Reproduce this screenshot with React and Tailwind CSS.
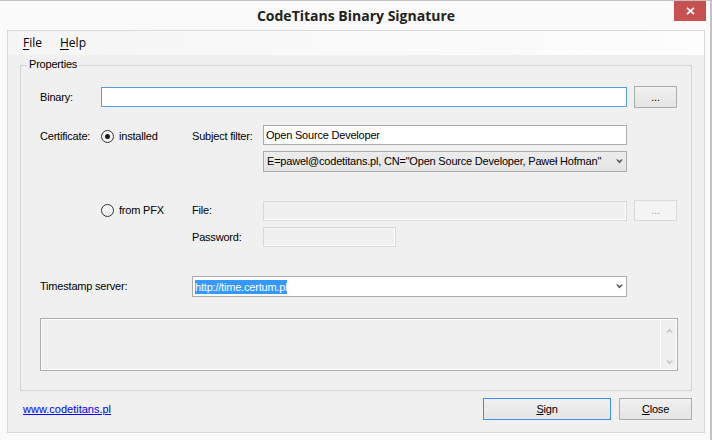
import React from "react";

function Radio({ checked }) {
  return (
    <span className="flex w-[13px] h-[13px] shrink-0 items-center justify-center rounded-full border border-[#333333] bg-gradient-to-b from-[#fcfcfc] to-[#ececec]">
      {checked && <span className="w-[5px] h-[5px] rounded-full bg-[#1c1c1c]" />}
    </span>
  );
}

function Chevron({ color = "#5a5a5a", flip = false }) {
  return (
    <svg width="7" height="5" viewBox="0 0 7 5" className={flip ? "rotate-180" : ""}>
      <path d="M0 0.5H2L3.5 2L5 0.5H7L3.5 4.5Z" fill={color} />
    </svg>
  );
}

function Btn({ children, className = "", disabled = false, primary = false }) {
  const border = disabled
    ? "border-[#d9d9d9] bg-[#f4f4f4] text-[#a3a3a3]"
    : primary
    ? "border-[#3c8ff0] bg-gradient-to-b from-[#f0f0f0] to-[#e5e5e5] text-black"
    : "border-[#acacac] bg-gradient-to-b from-[#f0f0f0] to-[#e5e5e5] text-black";
  return (
    <div className={"flex items-center justify-center border " + border + " " + className}>
      {children}
    </div>
  );
}

export default function App() {
  return (
    <div className="w-[712px] h-[440px] overflow-hidden bg-[#fafafa] flex flex-col border-t border-r-2 border-[#c3c3c3] pl-[7px] pr-[5px] pb-[7px] font-['Liberation_Sans',Arial,sans-serif] text-[11px] leading-[13px] tracking-[-0.2px] text-black">
      {/* title bar */}
      <div className="relative h-[29px] shrink-0 flex items-center justify-center">
        <span className="font-['Open_Sans',sans-serif] font-bold text-[14px] leading-[18px] tracking-normal text-[#222222]">
          CodeTitans Binary Signature
        </span>
        <div className="absolute top-0 right-[-1px] w-[32px] h-[20px] bg-[#c75050] flex items-center justify-center">
          <svg width="9" height="8" viewBox="0 0 9 8">
            <path d="M1 0.8L8 7.2M8 0.8L1 7.2" stroke="#ffffff" strokeWidth="1.7" />
          </svg>
        </div>
      </div>

      {/* client */}
      <div className="flex-1 flex flex-col border border-[#d9d9d9] bg-[#f0f0f0]">
        {/* menu */}
        <div className="h-[24px] shrink-0 flex items-center bg-gradient-to-r from-[#f5f5f5] to-[#fdfdfd] font-['Open_Sans',sans-serif] text-[12px] leading-[16px] tracking-normal">
          <span className="ml-[15px]">
            <span className="underline underline-offset-2">F</span>ile
          </span>
          <span className="ml-[18px]">
            <span className="underline underline-offset-2">H</span>elp
          </span>
        </div>

        {/* group box */}
        <div className="relative mt-[10px] mx-[12px] border border-[#d5d5d5] pl-[19px] pb-[19px] flex flex-col">
          <span className="absolute top-[-8px] left-[6px] px-[2px] bg-[#f0f0f0]">Properties</span>

          {/* Binary */}
          <div className="mt-[20px] h-[22px] flex items-center">
            <span className="w-[61px]">Binary:</span>
            <div className="w-[526px] h-[20px] bg-white border border-[#569de5]" />
            <Btn className="ml-[7px] w-[43px] h-[22px]">...</Btn>
          </div>

          {/* Certificate installed */}
          <div className="mt-[17px] h-[20px] flex items-start">
            <span className="w-[61px] mt-[5px]">Certificate:</span>
            <span className="w-[91px] mt-[5px] h-[13px] flex items-center gap-[5px]">
              <Radio checked />
              <span>installed</span>
            </span>
            <span className="w-[71px] mt-[5px]">Subject filter:</span>
            <div className="w-[364px] h-[20px] bg-white border border-[#acacac] flex items-center pl-[2px]">
              Open Source Developer
            </div>
          </div>

          {/* certificate combo */}
          <div className="mt-[6px] h-[21px] flex items-center">
            <div className="ml-[223px] w-[364px] h-[21px] border border-[#acacac] bg-gradient-to-b from-[#ececec] to-[#e5e5e5] flex items-center justify-between pl-[3px] pr-[3px]">
              <span className="whitespace-nowrap">E=pawel@codetitans.pl, CN="Open Source Developer, Paweł Hofman"</span>
              <Chevron />
            </div>
          </div>

          {/* from PFX */}
          <div className="mt-[28px] h-[21px] flex items-center">
            <span className="w-[61px]" />
            <span className="w-[91px] h-[13px] flex items-center gap-[5px]">
              <Radio />
              <span>from PFX</span>
            </span>
            <span className="w-[71px]">File:</span>
            <div className="self-end w-[364px] h-[20px] bg-[#f0f0f0] border border-[#d9d9d9] shadow-[inset_-1px_-1px_0_#ffffff]" />
            <Btn disabled className="ml-[7px] w-[43px] h-[21px]">...</Btn>
          </div>

          {/* Password */}
          <div className="mt-[6px] h-[20px] flex items-center">
            <span className="w-[152px]" />
            <span className="w-[71px]">Password:</span>
            <div className="w-[133px] h-[20px] bg-[#f0f0f0] border border-[#d9d9d9] shadow-[inset_-1px_-1px_0_#ffffff]" />
          </div>

          {/* Timestamp */}
          <div className="mt-[29px] h-[21px] flex items-center">
            <span className="w-[152px]">Timestamp server:</span>
            <div className="w-[435px] h-[21px] bg-white border border-[#acacac] flex items-center justify-between pl-[2px] pr-[3px]">
              <span className="bg-[#3399ff] text-white leading-[14px]">http://time.certum.pl</span>
              <Chevron />
            </div>
          </div>

          {/* log box */}
          <div className="mt-[21px] w-[638px] h-[53px] border border-[#adadad] bg-[#f0f0f0] shadow-[inset_1px_1px_0_#ffffff,inset_-1px_-1px_0_#ffffff] flex justify-end">
            <div className="w-[17px] h-full border-l border-white flex flex-col items-center justify-between pt-[9px] pb-[5px]">
              <Chevron color="#c6c6c6" flip />
              <Chevron color="#c6c6c6" />
            </div>
          </div>
        </div>

        {/* bottom bar */}
        <div className="mt-[7px] h-[22px] flex items-center pl-[15px] pr-[12px]">
          <a className="text-[#0000ff] underline tracking-normal">www.codetitans.pl</a>
          <div className="ml-auto flex gap-[8px]">
            <Btn primary className="w-[128px] h-[22px]">
              <span>
                <span className="underline">S</span>ign
              </span>
            </Btn>
            <Btn className="w-[73px] h-[22px]">
              <span>
                <span className="underline">C</span>lose
              </span>
            </Btn>
          </div>
        </div>
      </div>
    </div>
  );
}
